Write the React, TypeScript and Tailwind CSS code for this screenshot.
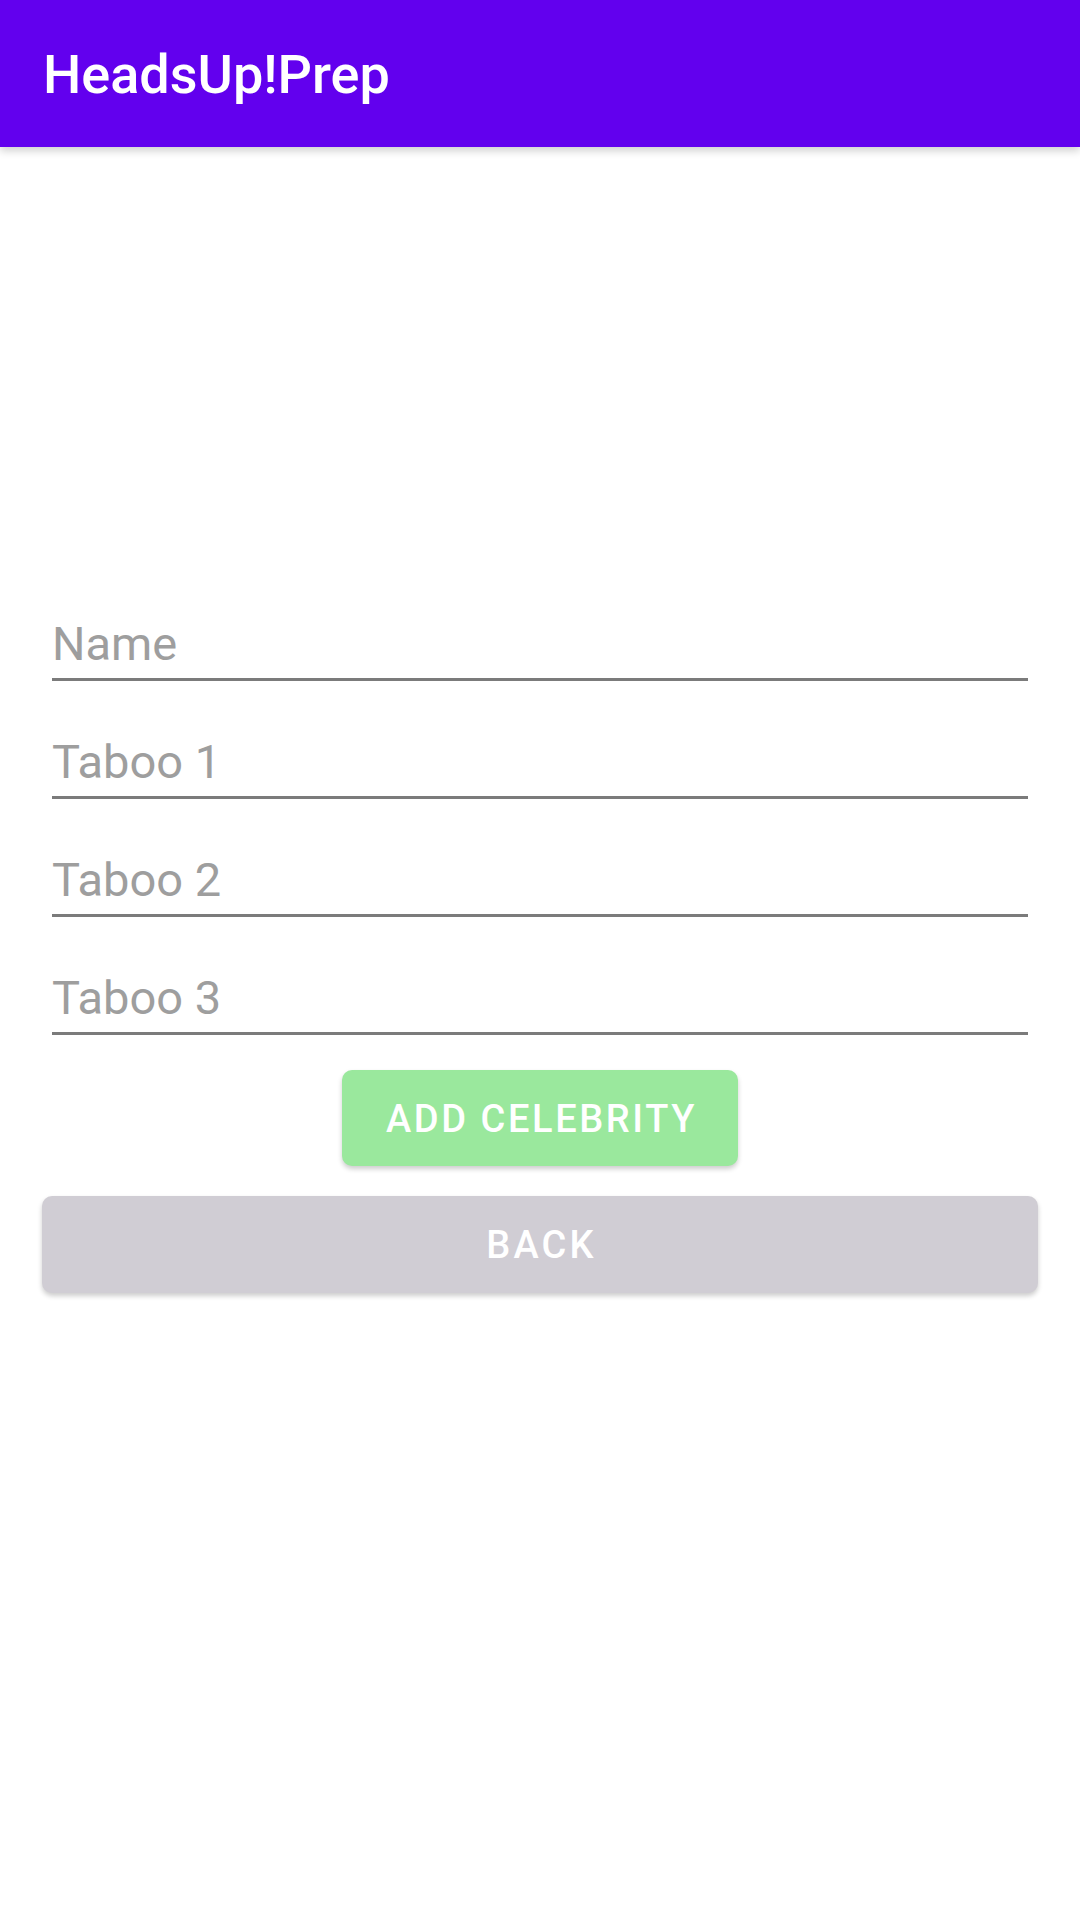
import * as React from "react";

const fields = ["Name", "Taboo 1", "Taboo 2", "Taboo 3"];

function Field({ placeholder, first }: { placeholder: string; first?: boolean }) {
  return (
    <div className={first ? "mx-[10px]" : "mx-[10px] mt-[53px]"}>
      <div className="text-[47px] leading-[55px] text-[#9e9e9e]">{placeholder}</div>
      <div className="mt-[7px] h-[3px] bg-[#7b7b7b]" />
    </div>
  );
}

export default function App() {
  return (
    <div className="min-h-[1920px] bg-white font-['Roboto',sans-serif]">
      <header className="relative z-10 flex h-[147px] items-center bg-[#6200ee] px-[43px] pt-[2px] shadow-[0_4px_8px_rgba(0,0,0,0.18)]">
        <h1 className="text-[54px] font-medium leading-normal text-white">HeadsUp!Prep</h1>
      </header>

      <main className="px-[42px] pt-[469px]">
        {fields.map((f, i) => (
          <Field key={f} placeholder={f} first={i === 0} />
        ))}

        <div className="mt-[35px] flex justify-center">
          <button
            type="button"
            className="h-[96px] w-[396px] rounded-[10px] bg-[#9ae89d] pl-[3px] pt-[3px] text-[38px] font-medium uppercase tracking-[2.6px] text-white shadow-[0_3px_5px_rgba(0,0,0,0.2)]"
          >
            Add Celebrity
          </button>
        </div>

        <button
          type="button"
          className="mt-[30px] h-[97px] w-full rounded-[10px] bg-[#d0cdd4] pl-[3px] pt-[2px] text-[38px] font-medium uppercase tracking-[3.2px] text-white shadow-[0_3px_5px_rgba(0,0,0,0.2)]"
        >
          Back
        </button>
      </main>
    </div>
  );
}
